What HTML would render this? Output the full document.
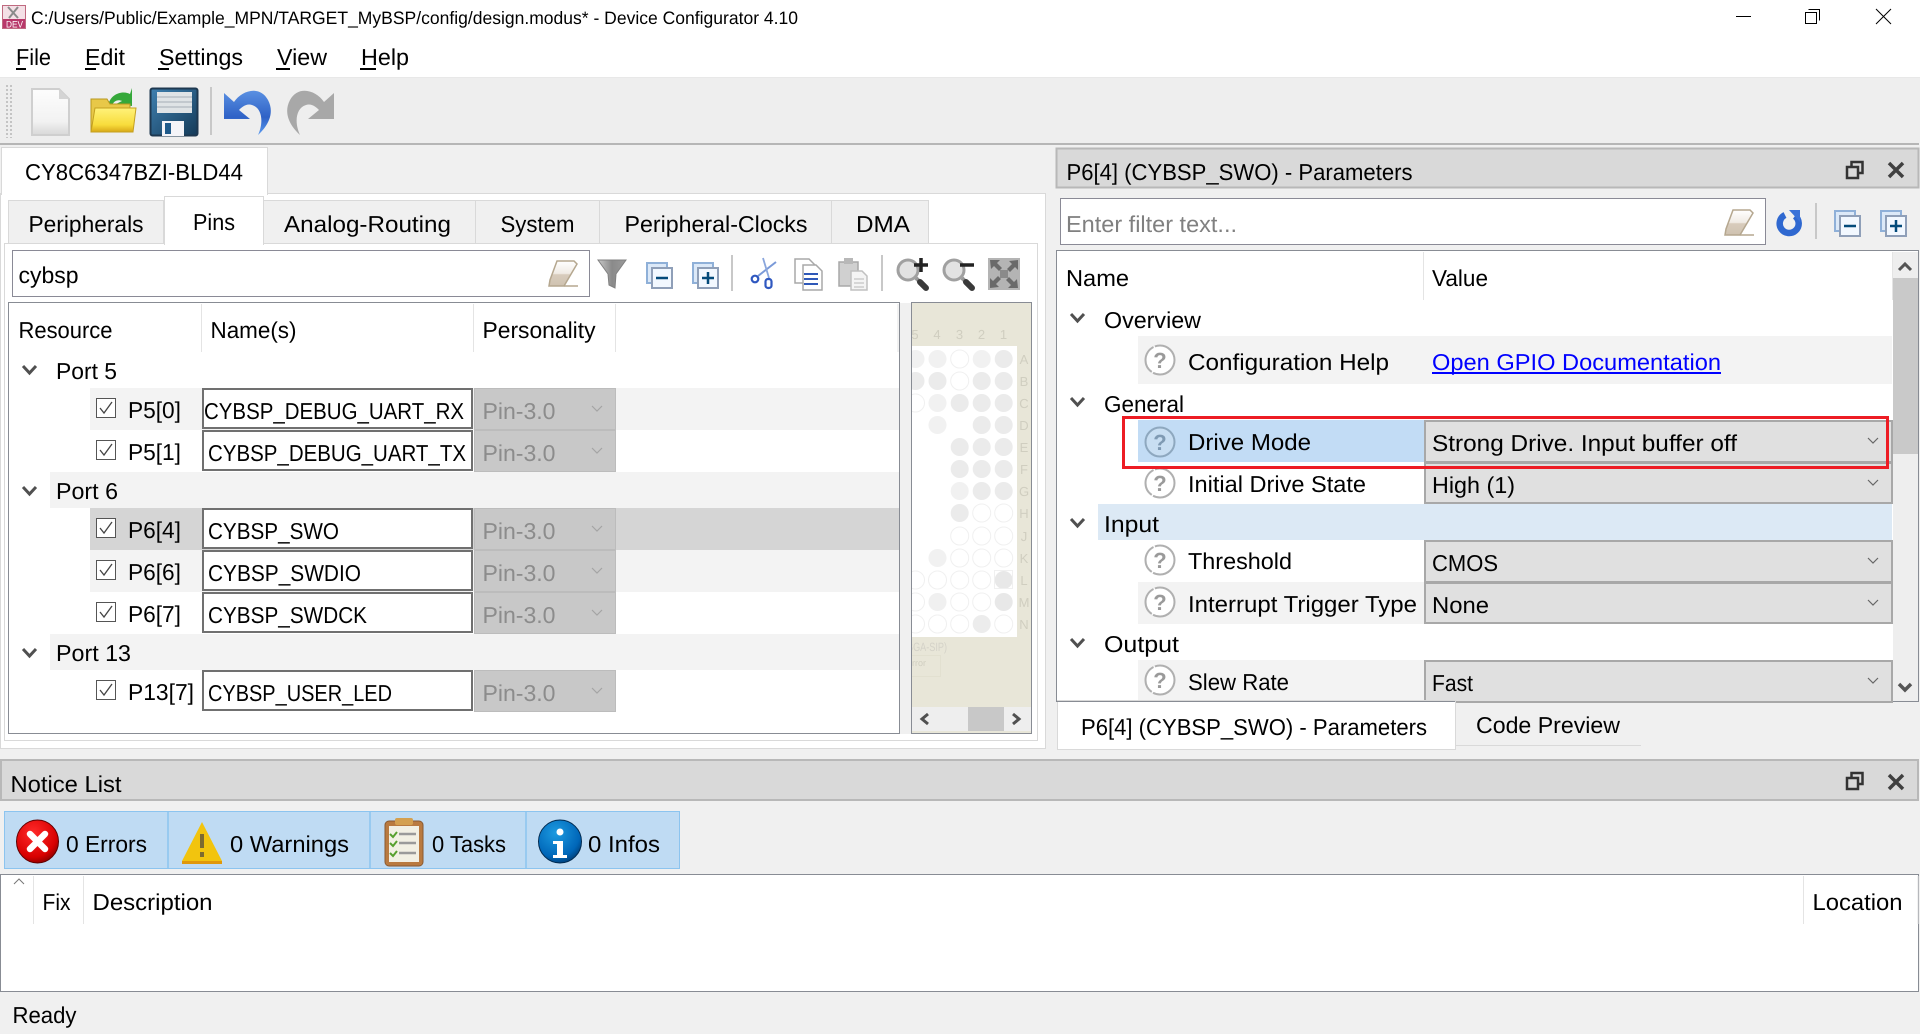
<!DOCTYPE html>
<html><head><meta charset="utf-8"><title>Device Configurator</title>
<style>
html,body{margin:0;padding:0;background:#f0f0f0;overflow:hidden}
svg{display:block}
text{font-family:"Liberation Sans",sans-serif;font-size:23px;fill:#000;text-rendering:geometricPrecision}
.g{fill:#8c8c8c}.ph{fill:#808080}.l{fill:#0000ee}
.pk{fill:#d0cec0;font-size:13px}
</style></head><body>
<svg xmlns="http://www.w3.org/2000/svg" width="1920" height="1034" viewBox="0 0 1920 1034">
<defs>
<linearGradient id="er" x1="0" y1="0" x2="0" y2="1"><stop offset="0" stop-color="#fff"/><stop offset=".5" stop-color="#f0ebe4"/><stop offset=".55" stop-color="#d8ccbc"/><stop offset="1" stop-color="#cfc2b0"/></linearGradient>
<linearGradient id="fn" x1="0" y1="0" x2="1" y2="0"><stop offset="0" stop-color="#c8c8c8"/><stop offset=".5" stop-color="#8a8a8a"/><stop offset="1" stop-color="#9a9a9a"/></linearGradient>
<linearGradient id="doc" x1="0" y1="0" x2="0" y2="1"><stop offset="0" stop-color="#fdfdfd"/><stop offset=".7" stop-color="#f2f2f2"/><stop offset="1" stop-color="#d8d8d8"/></linearGradient>
<linearGradient id="fol" x1="0" y1="0" x2="0" y2="1"><stop offset="0" stop-color="#fff27a"/><stop offset=".7" stop-color="#f8dc3c"/><stop offset="1" stop-color="#d8a818"/></linearGradient>
<linearGradient id="sav" x1="0" y1="0" x2="1" y2="1"><stop offset="0" stop-color="#3f80b0"/><stop offset="1" stop-color="#143a58"/></linearGradient>
<linearGradient id="und" x1="0" y1="0" x2="0" y2="1"><stop offset="0" stop-color="#5a90e2"/><stop offset=".6" stop-color="#2f62c6"/><stop offset="1" stop-color="#5a9af0"/></linearGradient>
<radialGradient id="red" cx=".4" cy=".3" r=".8"><stop offset="0" stop-color="#ff2a2a"/><stop offset=".7" stop-color="#d80000"/><stop offset="1" stop-color="#700000"/></radialGradient>
<radialGradient id="blu" cx=".4" cy=".3" r=".8"><stop offset="0" stop-color="#1c9ae0"/><stop offset=".7" stop-color="#0066b8"/><stop offset="1" stop-color="#003060"/></radialGradient>
<g id="chev"><path d="M0 0l6.500 7 6.500-7" fill="none" stroke="#505050" stroke-width="3"/></g>
<g id="dd"><path d="M-5-3l5 5 5-5" fill="none" stroke="#666" stroke-width="1.200"/></g>
<g id="ddg"><path d="M-5-3l5 5 5-5" fill="none" stroke="#a4a4a4" stroke-width="1.200"/></g>
<g id="cb"><rect x=".5" y=".5" width="19" height="19" fill="#fff" stroke="#555"/><path d="M4 10l4 5 8-11" fill="none" stroke="#444" stroke-width="1.300"/></g>
<g id="eraser"><path d="M9 1h17l3 3-13 22H1l1-6z" fill="url(#er)" stroke="#b5a78f" stroke-width="1.500"/><path d="M16 26h14" stroke="#b5a78f" stroke-width="1.500"/></g>
<g id="col"><rect x="1" y="1" width="20" height="20" fill="#dce9f8" stroke="#8fb0d8" stroke-width="2"/><rect x="6" y="6" width="20" height="20" fill="#f2f8ff" stroke="#8f9fb8" stroke-width="2"/><path d="M10 16h12" stroke="#034a7a" stroke-width="2.500"/></g>
<g id="exp"><rect x="1" y="1" width="20" height="20" fill="#dce9f8" stroke="#8fb0d8" stroke-width="2"/><rect x="6" y="6" width="20" height="20" fill="#f2f8ff" stroke="#8f9fb8" stroke-width="2"/><path d="M10 16h12M16 10v12" stroke="#034a7a" stroke-width="2.500"/></g>
<g id="restore"><path d="M5.500 5V1h11v11h-5" fill="none" stroke="#333" stroke-width="2.500"/><rect x="1" y="6" width="11" height="11" fill="none" stroke="#333" stroke-width="2.500"/></g>
<g id="closex"><path d="M1 1l14 14M15 1L1 15" stroke="#404040" stroke-width="3.500"/></g>
<g id="q"><circle r="14.500" fill="#fff" stroke="#b0b0b0" stroke-width="2" stroke-dasharray="30 1.500"/></g>
<g id="mag"><circle cx="12" cy="11" r="10" fill="#e2e2e2" stroke="#a0a0a0" stroke-width="3"/><path d="M20 19l4 4" stroke="#999" stroke-width="4"/><path d="M24 23l6 6" stroke="#3a3a3a" stroke-width="6" stroke-linecap="round"/></g>
</defs>

<rect width="1920" height="1034" fill="#f0f0f0"/>
<!-- title + menu -->
<rect width="1920" height="77" fill="#fff"/>
<rect y="77" width="1920" height="1" fill="#e8e8e8"/>
<rect x="2.500" y="5.500" width="23" height="23" fill="#f4e0e6" stroke="#c06a80"/>
<rect x="3" y="19" width="22" height="9" fill="#b8386a"/>
<path d="M8 7l10 11M18 7L9 18" stroke="#8a8a8a" stroke-width="2"/>
<text x="6" y="27.500" style="font-size:9.500px;fill:#fff" textLength="17" lengthAdjust="spacingAndGlyphs">DEV</text>
<text x="31" y="24" style="font-size:18px" textLength="767" lengthAdjust="spacingAndGlyphs">C:/Users/Public/Example_MPN/TARGET_MyBSP/config/design.modus* - Device Configurator 4.10</text>
<path d="M1736 16.500h15" stroke="#000"/>
<path d="M1808.500 9.500h11v11M1805.500 12.500h11v11h-11z" fill="none" stroke="#000"/>
<path d="M1876 9l15 15M1891 9l-15 15" stroke="#000"/>
<text x="16" y="65" textLength="35" lengthAdjust="spacingAndGlyphs">File</text>
<text x="85" y="65" textLength="40" lengthAdjust="spacingAndGlyphs">Edit</text>
<text x="159" y="65" textLength="84" lengthAdjust="spacingAndGlyphs">Settings</text>
<text x="277" y="65" textLength="50" lengthAdjust="spacingAndGlyphs">View</text>
<text x="361" y="65" textLength="48" lengthAdjust="spacingAndGlyphs">Help</text>
<path d="M16 69h10M85 69h11M158 69h11M276 69h14M360 69h16" stroke="#000" stroke-width="2"/>

<!-- toolbar -->
<rect y="78" width="1920" height="65" fill="#eeeeee"/>
<path d="M7 85v53M11 85v53" stroke="#c4c4c4" stroke-width="2" stroke-dasharray="2 2"/>
<path d="M32 89h27l10 10v36H32z" fill="url(#doc)" stroke="#cfcfcf" stroke-width="2"/>
<path d="M59 89l10 10H59z" fill="#d4d4d4"/>
<path d="M108 106c2-12 14-16 22-12l2-6v18l-16-2 6-3c-4-2-9 0-10 5z" fill="#35a83a"/>
<path d="M91 99h16l3 5h20v28H91z" fill="#e8c848" stroke="#b89820"/>
<path d="M95 108h41l-3 24H91z" fill="url(#fol)" stroke="#c4a020"/>
<rect x="150.500" y="88.500" width="47" height="47" rx="2" fill="url(#sav)" stroke="#1e3850" stroke-width="2"/>
<rect x="157" y="92" width="35" height="21" fill="#dfe3e6"/>
<path d="M157 97h35M157 102h35M157 107h35" stroke="#b8c0c6" stroke-width="1.500"/>
<rect x="162" y="121" width="22" height="15" fill="#f4f4f8"/>
<rect x="165" y="123" width="6" height="11" fill="#1f5a8a"/>
<rect x="210" y="87" width="2" height="48" fill="#c8c8c8"/>
<path d="M224 93l10 9c8-12 26-17 34-2 7 13 0 26-10 35 6-13 4-27-6-30-6-2-11 3-13 5l11 9h-26z" fill="url(#und)"/>
<path d="M334 93l-10 9c-8-12-26-17-34-2-7 13 0 26 10 35-6-13-4-27 6-30 6-2 11 3 13 5l-11 9h26z" fill="#a8a8a8"/>
<path d="M0 144h1919" stroke="#b6b6b6" stroke-width="2"/>

<!-- left pane -->
<rect x="0.500" y="193.500" width="1045" height="555" fill="#fff" stroke="#d9d9d9"/>
<rect x="1.500" y="147.500" width="266" height="47" fill="#fff" stroke="#d9d9d9"/>
<rect x="2" y="192" width="265" height="4" fill="#fff"/>
<text x="25" y="180" textLength="218" lengthAdjust="spacingAndGlyphs">CY8C6347BZI-BLD44</text>
<rect x="8.500" y="200.500" width="155" height="43" fill="#f0f0f0" stroke="#d9d9d9"/>
<rect x="263.500" y="200.500" width="212" height="43" fill="#f0f0f0" stroke="#d9d9d9"/>
<rect x="475.500" y="200.500" width="124" height="43" fill="#f0f0f0" stroke="#d9d9d9"/>
<rect x="599.500" y="200.500" width="232" height="43" fill="#f0f0f0" stroke="#d9d9d9"/>
<rect x="831.500" y="200.500" width="97" height="43" fill="#f0f0f0" stroke="#d9d9d9"/>
<rect x="4.500" y="243.500" width="1033" height="497" fill="#fff" stroke="#d9d9d9"/>
<rect x="164.500" y="196.500" width="99" height="48" fill="#fff" stroke="#d9d9d9"/>
<rect x="165" y="241" width="98" height="5" fill="#fff"/>
<text x="28.500" y="232" textLength="115" lengthAdjust="spacingAndGlyphs">Peripherals</text>
<text x="193" y="230" textLength="42" lengthAdjust="spacingAndGlyphs">Pins</text>
<text x="284" y="232" textLength="167" lengthAdjust="spacingAndGlyphs">Analog-Routing</text>
<text x="500.500" y="232" textLength="74" lengthAdjust="spacingAndGlyphs">System</text>
<text x="624.500" y="232" textLength="183" lengthAdjust="spacingAndGlyphs">Peripheral-Clocks</text>
<text x="856" y="232" textLength="54" lengthAdjust="spacingAndGlyphs">DMA</text>

<!-- left filter -->
<rect x="12.500" y="250.500" width="577" height="46" fill="#fff" stroke="#8a8a96"/>
<text x="18.500" y="283" textLength="60" lengthAdjust="spacingAndGlyphs">cybsp</text>
<use href="#eraser" x="548" y="260"/>
<path d="M598 260h28l-10 14-1 14-6-3-1-11z" fill="url(#fn)" stroke="#808080"/>
<use href="#col" x="646" y="262"/>
<use href="#exp" x="692" y="262"/>
<rect x="731" y="255" width="2" height="36" fill="#c8c8c8"/>
<path d="M776 262l-18 14" stroke="#7a9ad8" stroke-width="2"/>
<path d="M763 258l6 20" stroke="#8aa6dc" stroke-width="1.800"/>
<circle cx="755" cy="279" r="3.300" fill="none" stroke="#2f58c0" stroke-width="2.200"/>
<rect x="765.500" y="279" width="6" height="9" rx="2.500" fill="none" stroke="#2f58c0" stroke-width="2.200"/>
<path d="M795 259h14l6 6v18h-20z" fill="#fff" stroke="#a8a8a8" stroke-width="1.500"/>
<path d="M803 265h13l6 6v19h-19z" fill="#fff" stroke="#a8a8a8" stroke-width="1.500"/>
<path d="M804 274h14M804 279h14M804 284h14" stroke="#2f58b8" stroke-width="2"/>
<rect x="839" y="262" width="19" height="24" fill="#d0d0d0" stroke="#a8a8a8" stroke-width="1.500"/>
<rect x="844" y="258" width="9" height="6" fill="#b8b8b8"/>
<path d="M851 271h11l5 5v14h-16z" fill="#f4f4f4" stroke="#c0c0c0" stroke-width="1.500"/>
<path d="M854 279h10M854 283h10M854 287h10" stroke="#ccc" stroke-width="1.500"/>
<rect x="881" y="255" width="2" height="36" fill="#c8c8c8"/>
<use href="#mag" x="896" y="259"/>
<path d="M914 265h14M921 258v14" stroke="#222" stroke-width="3.500"/>
<use href="#mag" x="942" y="259"/>
<path d="M960 265h14" stroke="#222" stroke-width="3.500"/>
<rect x="988" y="258" width="32" height="32" fill="#b4b4b4"/>
<path d="M990 260h10l-3 3 5 5-3 3-5-5-3 3zM1018 260v10l-3-3-5 5-3-3 5-5-3-3zM990 288v-10l3 3 5-5 3 3-5 5 3 3zM1018 288h-10l3-3-5-5 3-3 5 5 3-3z" fill="#6a6a6a"/>
<rect x="1000" y="270" width="8" height="8" fill="#8a8a8a"/>

<!-- resource table -->
<rect x="8.500" y="302.500" width="891" height="431" fill="#fff" stroke="#888c94"/>
<rect x="900" y="303" width="11" height="431" fill="#f0f0f0"/>
<path d="M201.500 304v48M473.500 304v48M615.500 304v48M898 304v48" stroke="#e4e4e4"/>
<text x="18.500" y="338" textLength="94" lengthAdjust="spacingAndGlyphs">Resource</text>
<text x="210.500" y="338" textLength="86" lengthAdjust="spacingAndGlyphs">Name(s)</text>
<text x="482.500" y="338" textLength="113" lengthAdjust="spacingAndGlyphs">Personality</text>

<rect x="90" y="388" width="809" height="42" fill="#f3f3f3"/>
<rect x="50" y="472" width="849" height="36" fill="#f3f3f3"/>
<rect x="90" y="508" width="809" height="42" fill="#d5d5d5"/>
<rect x="90" y="550" width="809" height="42" fill="#f3f3f3"/>
<rect x="50" y="634" width="849" height="36" fill="#f3f3f3"/>

<use href="#chev" x="23" y="366"/><use href="#chev" x="23" y="487"/><use href="#chev" x="23" y="649"/>
<text x="56" y="379" textLength="61" lengthAdjust="spacingAndGlyphs">Port 5</text>
<text x="56" y="499" textLength="62" lengthAdjust="spacingAndGlyphs">Port 6</text>
<text x="56" y="661" textLength="75" lengthAdjust="spacingAndGlyphs">Port 13</text>

<use href="#cb" x="96" y="398"/><use href="#cb" x="96" y="440"/><use href="#cb" x="96" y="518"/><use href="#cb" x="96" y="560"/><use href="#cb" x="96" y="602"/><use href="#cb" x="96" y="680"/>
<text x="128" y="418" textLength="53" lengthAdjust="spacingAndGlyphs">P5[0]</text>
<text x="128" y="460" textLength="53" lengthAdjust="spacingAndGlyphs">P5[1]</text>
<text x="128" y="538" textLength="53" lengthAdjust="spacingAndGlyphs">P6[4]</text>
<text x="128" y="580" textLength="53" lengthAdjust="spacingAndGlyphs">P6[6]</text>
<text x="128" y="622" textLength="53" lengthAdjust="spacingAndGlyphs">P6[7]</text>
<text x="128" y="700" textLength="66" lengthAdjust="spacingAndGlyphs">P13[7]</text>

<g fill="#fff" stroke="#707070" stroke-width="2">
<rect x="203" y="389" width="269" height="39"/>
<rect x="203" y="431" width="269" height="39"/>
<rect x="203" y="509" width="269" height="39"/>
<rect x="203" y="551" width="269" height="39"/>
<rect x="203" y="593" width="269" height="39"/>
<rect x="203" y="671" width="269" height="39"/>
</g>
<text x="204" y="419" textLength="260" lengthAdjust="spacingAndGlyphs">CYBSP_DEBUG_UART_RX</text>
<text x="208" y="461" textLength="258" lengthAdjust="spacingAndGlyphs">CYBSP_DEBUG_UART_TX</text>
<text x="208" y="539" textLength="131" lengthAdjust="spacingAndGlyphs">CYBSP_SWO</text>
<text x="208" y="581" textLength="153" lengthAdjust="spacingAndGlyphs">CYBSP_SWDIO</text>
<text x="208" y="623" textLength="159" lengthAdjust="spacingAndGlyphs">CYBSP_SWDCK</text>
<text x="208" y="701" textLength="184" lengthAdjust="spacingAndGlyphs">CYBSP_USER_LED</text>

<g fill="#c8c8c8" stroke="#bcbcbc">
<rect x="474.500" y="388.500" width="141" height="41"/>
<rect x="474.500" y="430.500" width="141" height="41"/>
<rect x="474.500" y="508.500" width="141" height="41"/>
<rect x="474.500" y="550.500" width="141" height="41"/>
<rect x="474.500" y="592.500" width="141" height="41"/>
<rect x="474.500" y="670.500" width="141" height="41"/>
</g>
<text class="g" x="482.500" y="419" textLength="73" lengthAdjust="spacingAndGlyphs">Pin-3.0</text>
<text class="g" x="482.500" y="461" textLength="73" lengthAdjust="spacingAndGlyphs">Pin-3.0</text>
<text class="g" x="482.500" y="539" textLength="73" lengthAdjust="spacingAndGlyphs">Pin-3.0</text>
<text class="g" x="482.500" y="581" textLength="73" lengthAdjust="spacingAndGlyphs">Pin-3.0</text>
<text class="g" x="482.500" y="623" textLength="73" lengthAdjust="spacingAndGlyphs">Pin-3.0</text>
<text class="g" x="482.500" y="701" textLength="73" lengthAdjust="spacingAndGlyphs">Pin-3.0</text>
<use href="#ddg" x="597" y="409"/><use href="#ddg" x="597" y="451"/><use href="#ddg" x="597" y="529"/><use href="#ddg" x="597" y="571"/><use href="#ddg" x="597" y="613"/><use href="#ddg" x="597" y="691"/>

<!-- package view -->
<clipPath id="pkc"><rect x="912" y="303" width="120" height="430"/></clipPath>
<rect x="911.500" y="302.500" width="120" height="431" fill="#e8e6d8" stroke="#888c94"/>
<g clip-path="url(#pkc)">
<rect x="912" y="346" width="105" height="291" fill="#fff"/>
<text class="pk" x="915" y="339" text-anchor="middle">5</text><text class="pk" x="937" y="339" text-anchor="middle">4</text><text class="pk" x="959.500" y="339" text-anchor="middle">3</text><text class="pk" x="981.500" y="339" text-anchor="middle">2</text><text class="pk" x="1003.500" y="339" text-anchor="middle">1</text>
<text class="pk" x="1024" y="364" text-anchor="middle">A</text><text class="pk" x="1024" y="386" text-anchor="middle">B</text><text class="pk" x="1024" y="408" text-anchor="middle">C</text><text class="pk" x="1024" y="430" text-anchor="middle">D</text><text class="pk" x="1024" y="452" text-anchor="middle">E</text><text class="pk" x="1024" y="474" text-anchor="middle">F</text><text class="pk" x="1024" y="496" text-anchor="middle">G</text><text class="pk" x="1024" y="518" text-anchor="middle">H</text><text class="pk" x="1024" y="541" text-anchor="middle">J</text><text class="pk" x="1024" y="563" text-anchor="middle">K</text><text class="pk" x="1024" y="585" text-anchor="middle">L</text><text class="pk" x="1024" y="607" text-anchor="middle">M</text><text class="pk" x="1024" y="629" text-anchor="middle">N</text>
<g fill="#ebebeb">
<circle cx="915.500" cy="359" r="9" fill="#f1f1f1"/><circle cx="937.500" cy="359" r="9" fill="#f1f1f1"/><circle cx="981.700" cy="359" r="9" fill="#f1f1f1"/><circle cx="1003.700" cy="359" r="9"/>
<circle cx="915.500" cy="381" r="9"/><circle cx="937.500" cy="381" r="9"/><circle cx="981.700" cy="381" r="9"/><circle cx="1003.700" cy="381" r="9"/>
<circle cx="937.500" cy="403" r="9" fill="#f1f1f1"/><circle cx="959.700" cy="403" r="9"/><circle cx="981.700" cy="403" r="9"/><circle cx="1003.700" cy="403" r="9"/>
<circle cx="937.500" cy="425" r="9" fill="#f1f1f1"/><circle cx="981.700" cy="425" r="9"/><circle cx="1003.700" cy="425" r="9"/>
<circle cx="959.700" cy="447" r="9"/><circle cx="981.700" cy="447" r="9"/><circle cx="1003.700" cy="447" r="9"/>
<circle cx="959.700" cy="469" r="9"/><circle cx="981.700" cy="469" r="9"/><circle cx="1003.700" cy="469" r="9"/>
<circle cx="959.700" cy="491" r="9" fill="#f1f1f1"/><circle cx="981.700" cy="491" r="9"/><circle cx="1003.700" cy="491" r="9"/>
<circle cx="959.700" cy="513" r="9"/>
<circle cx="937.500" cy="558" r="9" fill="#f1f1f1"/>
<circle cx="1003.700" cy="580" r="9" fill="#e8e8e8"/>
<circle cx="937.500" cy="602" r="9" fill="#f0f0f0"/><circle cx="1003.700" cy="602" r="9" fill="#e8e8e8"/>
<circle cx="981.700" cy="624" r="9" fill="#ececec"/>
</g>
<g fill="#fff" stroke="#f0f0f0">
<circle cx="959.700" cy="359" r="9"/><circle cx="959.700" cy="381" r="9"/><circle cx="915.500" cy="403" r="9"/>
<circle cx="981.700" cy="513" r="9"/><circle cx="1003.700" cy="513" r="9"/>
<circle cx="959.700" cy="536" r="9"/><circle cx="981.700" cy="536" r="9"/><circle cx="1003.700" cy="536" r="9"/>
<circle cx="959.700" cy="558" r="9"/><circle cx="981.700" cy="558" r="9"/><circle cx="1003.700" cy="558" r="9"/>
<circle cx="915.500" cy="580" r="9"/><circle cx="937.500" cy="580" r="9"/><circle cx="959.700" cy="580" r="9"/><circle cx="981.700" cy="580" r="9"/>
<circle cx="915.500" cy="602" r="9"/><circle cx="959.700" cy="602" r="9"/><circle cx="981.700" cy="602" r="9"/>
<circle cx="915.500" cy="624" r="9"/><circle cx="937.500" cy="624" r="9"/><circle cx="959.700" cy="624" r="9"/><circle cx="1003.700" cy="624" r="9"/>
</g>
<rect x="994.500" y="570.500" width="18" height="18" fill="none" stroke="#f0f0f0"/>
<text x="907" y="651" style="font-size:12px;fill:#d4d2c8" textLength="40" lengthAdjust="spacingAndGlyphs">BGA-SIP)</text>
<rect x="905.500" y="655.500" width="35" height="21" fill="none" stroke="#e2e0d0"/>
<text x="912" y="666" style="font-size:9px;fill:#d0cec0">rror</text>
<rect x="912" y="707" width="119" height="24" fill="#eeeeee"/>
<rect x="968" y="707" width="36" height="24" fill="#c8c8c8"/>
<path d="M928 714l-6 5 6 5M1013 714l6 5-6 5" fill="none" stroke="#505050" stroke-width="3"/>
</g>

<!-- right panel -->
<rect x="1056.500" y="148.500" width="862" height="39" fill="#d9d9d9" stroke="#b8b8b8" stroke-width="2"/>
<text x="1066.500" y="180" textLength="346" lengthAdjust="spacingAndGlyphs">P6[4] (CYBSP_SWO) - Parameters</text>
<use href="#restore" x="1846" y="161"/>
<use href="#closex" x="1888" y="162"/>
<rect x="1060.500" y="198.500" width="705" height="46" fill="#fff" stroke="#8a8a96"/>
<text class="ph" x="1066" y="232" textLength="171" lengthAdjust="spacingAndGlyphs">Enter filter text...</text>
<use href="#eraser" x="1724" y="209"/>
<path d="M1785 215a9.500 9.500 0 1 0 10 1" fill="none" stroke="#2f68d0" stroke-width="6.500"/>
<path d="M1789 210h11v12z" fill="#3a72d8"/>
<rect x="1815" y="203" width="2" height="36" fill="#c8c8c8"/>
<use href="#col" x="1834" y="210"/>
<use href="#exp" x="1880" y="210"/>

<rect x="1056.500" y="250.500" width="862" height="451" fill="#fff" stroke="#888c94"/>
<rect x="1893" y="252" width="25" height="449" fill="#eeeeee"/>
<rect x="1893" y="278" width="25" height="176" fill="#c9c9c9"/>
<path d="M1899 270l6-6 6 6" fill="none" stroke="#555" stroke-width="3"/>
<path d="M1899 684l6 6 6-6" fill="none" stroke="#555" stroke-width="3.500"/>
<path d="M1423.500 252v48M1892.500 252v48" stroke="#e4e4e4"/>
<text x="1066" y="286" textLength="63" lengthAdjust="spacingAndGlyphs">Name</text>
<text x="1432" y="286" textLength="56" lengthAdjust="spacingAndGlyphs">Value</text>

<rect x="1138" y="336" width="754" height="48" fill="#f3f3f3"/>
<rect x="1138" y="420" width="286" height="42" fill="#c2dcf5"/>
<rect x="1098" y="504" width="794" height="36" fill="#dce9f5"/>
<rect x="1138" y="582" width="286" height="42" fill="#f3f3f3"/>
<rect x="1138" y="660" width="286" height="40" fill="#f3f3f3"/>

<use href="#chev" x="1071" y="314"/><use href="#chev" x="1071" y="398"/><use href="#chev" x="1071" y="519"/><use href="#chev" x="1071" y="639"/>
<text x="1104" y="328" textLength="97" lengthAdjust="spacingAndGlyphs">Overview</text>
<text x="1104" y="412" textLength="80" lengthAdjust="spacingAndGlyphs">General</text>
<text x="1104" y="532" textLength="55" lengthAdjust="spacingAndGlyphs">Input</text>
<text x="1104" y="652" textLength="75" lengthAdjust="spacingAndGlyphs">Output</text>

<use href="#q" x="1160" y="360"/>
<circle cx="1160" cy="442" r="14.500" fill="#c8def2" stroke="#8ea8bf" stroke-width="2"/>
<use href="#q" x="1160" y="483"/>
<use href="#q" x="1160" y="560"/>
<use href="#q" x="1160" y="602"/>
<use href="#q" x="1160" y="680"/>
<text x="1160" y="368" text-anchor="middle" style="font-size:22px;fill:#9a9a9a;font-weight:bold">?</text>
<text x="1160" y="450" text-anchor="middle" style="font-size:22px;fill:#7f9ab3;font-weight:bold">?</text>
<text x="1160" y="491" text-anchor="middle" style="font-size:22px;fill:#9a9a9a;font-weight:bold">?</text>
<text x="1160" y="568" text-anchor="middle" style="font-size:22px;fill:#9a9a9a;font-weight:bold">?</text>
<text x="1160" y="610" text-anchor="middle" style="font-size:22px;fill:#9a9a9a;font-weight:bold">?</text>
<text x="1160" y="688" text-anchor="middle" style="font-size:22px;fill:#9a9a9a;font-weight:bold">?</text>
<text x="1188" y="370" textLength="201" lengthAdjust="spacingAndGlyphs">Configuration Help</text>
<text x="1188" y="450" textLength="123" lengthAdjust="spacingAndGlyphs">Drive Mode</text>
<text x="1188" y="492" textLength="178" lengthAdjust="spacingAndGlyphs">Initial Drive State</text>
<text x="1188" y="569" textLength="104" lengthAdjust="spacingAndGlyphs">Threshold</text>
<text x="1188" y="612" textLength="229" lengthAdjust="spacingAndGlyphs">Interrupt Trigger Type</text>
<text x="1188" y="690" textLength="101" lengthAdjust="spacingAndGlyphs">Slew Rate</text>

<text x="1432" y="370" style="fill:#0000ff" textLength="289" lengthAdjust="spacingAndGlyphs">Open GPIO Documentation</text>
<rect x="1432" y="372" width="289" height="2" fill="#0000ff"/>

<g fill="#e0e0e0" stroke="#a8a8a8" stroke-width="2">
<rect x="1425" y="421" width="467" height="41"/>
<rect x="1425" y="463" width="467" height="40"/>
<rect x="1425" y="541" width="467" height="41"/>
<rect x="1425" y="583" width="467" height="40"/>
<rect x="1425" y="661" width="467" height="41"/>
</g>
<text x="1432" y="451" textLength="305" lengthAdjust="spacingAndGlyphs">Strong Drive. Input buffer off</text>
<text x="1432" y="493" textLength="83" lengthAdjust="spacingAndGlyphs">High (1)</text>
<text x="1432" y="571" textLength="66" lengthAdjust="spacingAndGlyphs">CMOS</text>
<text x="1432" y="613" textLength="57" lengthAdjust="spacingAndGlyphs">None</text>
<text x="1432" y="691" textLength="41" lengthAdjust="spacingAndGlyphs">Fast</text>
<use href="#dd" x="1873" y="441"/><use href="#dd" x="1873" y="483"/><use href="#dd" x="1873" y="561"/><use href="#dd" x="1873" y="603"/><use href="#dd" x="1873" y="681"/>
<rect x="1123.500" y="417.500" width="764" height="50" fill="none" stroke="#ed1c24" stroke-width="3"/>

<path d="M1455 745.500h186" stroke="#d9d9d9"/>
<rect x="1057.500" y="700.500" width="398" height="49" fill="#fff" stroke="#d9d9d9"/>
<path d="M1057 701.500h398" stroke="#888c94"/>
<text x="1081" y="735" textLength="346" lengthAdjust="spacingAndGlyphs">P6[4] (CYBSP_SWO) - Parameters</text>
<text x="1476" y="733" textLength="144" lengthAdjust="spacingAndGlyphs">Code Preview</text>

<!-- notice list -->
<rect x="1" y="760" width="1917" height="40" fill="#d9d9d9" stroke="#b8b8b8" stroke-width="2"/>
<text x="10.500" y="792" textLength="111" lengthAdjust="spacingAndGlyphs">Notice List</text>
<use href="#restore" x="1846" y="772"/>
<use href="#closex" x="1888" y="774"/>
<rect x="4.500" y="811.500" width="675" height="57" fill="#bfdbf3" stroke="#8cc4ef"/>
<path d="M168 811v57M370 811v57M526 811v57" stroke="#8cc4ef" stroke-width="1.500"/>
<ellipse cx="37.500" cy="841.500" rx="21" ry="21.500" fill="url(#red)" stroke="#600000"/>
<path d="M30 834l15 15M45 834l-15 15" stroke="#fff" stroke-width="6.500" stroke-linecap="round"/>
<text x="66" y="852" textLength="81" lengthAdjust="spacingAndGlyphs">0 Errors</text>
<path d="M202 822l20 39v3h-40v-3z" fill="#f2c40e"/>
<path d="M182 861h40v3h-40z" fill="#e0980a"/>
<rect x="200" y="834" width="4" height="14" fill="#7d6a30"/><rect x="200" y="852" width="4" height="5" fill="#7d6a30"/>
<text x="230" y="852" textLength="119" lengthAdjust="spacingAndGlyphs">0 Warnings</text>
<rect x="385" y="821" width="38" height="45" rx="4" fill="#b97a40" stroke="#8a5a30"/>
<rect x="389" y="826" width="30" height="36" fill="#f2f0e4"/>
<rect x="395" y="818" width="18" height="7" rx="2" fill="#d4a050"/>
<path d="M399 834h17M399 843h17M399 853h17" stroke="#9a9a9a" stroke-width="2.500"/>
<path d="M390 834l3 3 4-5M390 843l3 3 4-5M390 853l3 3 4-5" fill="none" stroke="#58a030" stroke-width="2"/>
<text x="432" y="852" textLength="74" lengthAdjust="spacingAndGlyphs">0 Tasks</text>
<ellipse cx="560" cy="841.500" rx="21.500" ry="21.500" fill="url(#blu)" stroke="#002a50"/>
<rect x="557" y="841" width="6" height="16" fill="#fff"/><rect x="553" y="841" width="8" height="3" fill="#fff"/><rect x="553" y="855" width="14" height="3" fill="#fff"/><circle cx="560" cy="832" r="3.500" fill="#fff"/>
<text x="588" y="852" textLength="72" lengthAdjust="spacingAndGlyphs">0 Infos</text>

<rect x="0.500" y="874.500" width="1918" height="117" fill="#fff" stroke="#888c94"/>
<path d="M14 884l5-5 5 5" fill="none" stroke="#777"/>
<path d="M33.500 876v48M83.500 876v48M1803.500 876v48M1918 876v48" stroke="#e4e4e4"/>
<text x="42.500" y="910" textLength="28" lengthAdjust="spacingAndGlyphs">Fix</text>
<text x="92.500" y="910" textLength="120" lengthAdjust="spacingAndGlyphs">Description</text>
<text x="1812.500" y="910" textLength="90" lengthAdjust="spacingAndGlyphs">Location</text>
<text x="12.500" y="1023" textLength="64" lengthAdjust="spacingAndGlyphs">Ready</text>
</svg>
</body></html>
